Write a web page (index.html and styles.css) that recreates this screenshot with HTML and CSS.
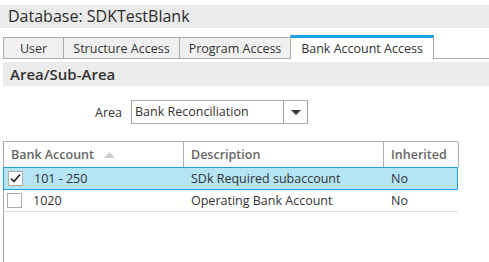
FILE: index.html
```html
<!DOCTYPE html>
<html lang="en">
<head>
  <meta charset="UTF-8" />
  <title>Bank Account Access</title>
  <link rel="stylesheet" href="styles.css">
</head>
<body>
  <div class="title">Database: SDKTestBlank</div>

  <div class="tabs">
    <div class="tab t-user">User</div>
    <div class="tab t-struct">Structure Access</div>
    <div class="tab t-prog">Program Access</div>
    <div class="tab t-bank active">Bank Account Access</div>
    <div class="tab-rest"></div>
  </div>

  <div class="section">Area/Sub-Area</div>

  <div class="area-row">
    <span class="area-label">Area</span>
    <div class="select">
      <span class="select-text">Bank Reconciliation</span>
      <span class="select-btn"><span class="caret"></span></span>
    </div>
  </div>

  <div class="grid">
    <div class="grid-head">
      <div class="col c1">Bank Account
        <svg class="sort" width="11" height="6" viewBox="0 0 11 6"><path d="M0 6 L5.5 0 L11 6 Z" fill="#cfcfcf"/></svg>
      </div>
      <div class="col c2">Description</div>
      <div class="col c3">Inherited</div>
    </div>
    <div class="grid-row selected">
      <div class="col c1">
        <span class="check">
          <svg width="13" height="13" viewBox="0 0 13 13"><path d="M2 6.5 L5 9.5 L11 2.5" fill="none" stroke="#222" stroke-width="1.6"/></svg>
        </span>
        101 - 250
      </div>
      <div class="col c2">SDk Required subaccount</div>
      <div class="col c3">No</div>
    </div>
    <div class="grid-row">
      <div class="col c1"><span class="check"></span>1020</div>
      <div class="col c2">Operating Bank Account</div>
      <div class="col c3">No</div>
    </div>
  </div>
</body>
</html>
```

FILE: styles.css
```css
* { margin:0; padding:0; box-sizing:border-box; }
body {
  font-family:"Open Sans", "Noto Sans", sans-serif;
  font-size:12.5px; color:#333;
  background:#fff; width:489px; height:262px; overflow:hidden;
}
.title {
  margin-top:5px; height:23px; background:#ebebeb;
  padding-left:8px; font-size:16px; line-height:23px; color:#2b2b2b;
}

.tabs { display:flex; margin-top:7px; padding-left:3px; align-items:flex-end; height:24px; }
.tab {
  height:22px; line-height:21px; text-align:center;
  background:#f0f0f0; border:1px solid #acacac; border-right:none;
  color:#333;
}
.t-user { width:60px; }
.t-struct { width:116px; }
.t-prog { width:111px; }
.t-bank { width:144px; }
.tab.active {
  height:24px; background:#fff; border-top:3px solid #1ba1e2;
  border-right:1px solid #acacac; border-bottom:none;
}
.tab-rest { flex:1; border-bottom:1px solid #acacac; height:1px; }

.section {
  margin:3px 0 0 3px; height:24px; background:#ebebeb;
  padding-left:7px; font-size:15px; font-weight:600; line-height:24px; color:#333;
}

.area-row { display:flex; align-items:center; margin-top:14px; height:24px; }
.area-label { width:131px; text-align:right; padding-right:9px; }
.select {
  display:flex; width:177px; height:24px; border:1px solid #acacac;
}
.select-text { flex:1; line-height:22px; padding-left:3px; }
.select-btn {
  width:24px; border-left:1px solid #acacac;
  display:flex; align-items:center; justify-content:center;
}
.caret {
  width:0; height:0; border-left:5px solid transparent; border-right:5px solid transparent;
  border-top:5px solid #333;
}

.grid {
  margin:17px 0 0 3px; width:455px; height:121px;
  border-left:1px solid #acacac; border-top:1px solid #acacac;
}
.grid-head { display:flex; height:25px; }
.grid-head .col {
  border-right:1px solid #acacac; font-weight:600; color:#666;
  line-height:25px; padding-left:7px;
}
.col { flex:none; white-space:nowrap; }
.c1 { width:180px; }
.c2 { width:200px; }
.c3 { width:75px; }
.sort { margin-left:7px; vertical-align:1px; }

.grid-row { display:flex; height:22px; align-items:center; border-bottom:1px solid #ddd; }
.grid-row .col { padding-left:7px; line-height:20px; }
.grid-row .c1 { display:flex; align-items:center; padding-left:3px; }
.grid-row.selected { background:#b5e4f5; border:1px solid #1ba1e2; margin-left:-1px; height:23px; }
.grid-row.selected .c1 { padding-left:4px; }
.check {
  width:15px; height:15px; border:1px solid #acacac; background:#fff;
  margin-right:11px; display:flex; align-items:center; justify-content:center;
}
```
